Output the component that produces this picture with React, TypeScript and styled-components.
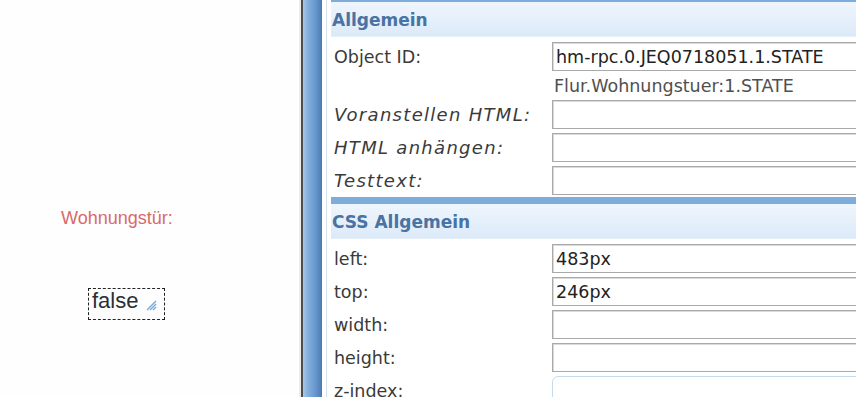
import React from 'react'
import styled, { createGlobalStyle } from 'styled-components'

const GlobalStyle = createGlobalStyle`
  html, body {
    margin: 0;
    padding: 0;
    background: #fff;
    overflow: hidden;
  }
`

const Page = styled.div`
  display: flex;
  width: 856px;
  height: 397px;
  overflow: hidden;
  background: #fff;
`

const Canvas = styled.div`
  position: relative;
  flex: 0 0 299px;
  border-right: 2px solid #ececec;
  background: #fefefe;
`

const Widget = styled.div<{ $x: number; $y: number }>`
  position: absolute;
  left: ${({ $x }) => $x}px;
  top: ${({ $y }) => $y}px;
  font-family: 'Liberation Sans', Arial, sans-serif;
`

const Caption = styled.span`
  font-size: 18px;
  line-height: 21px;
  color: #d86a6a;
  white-space: nowrap;
`

const Selected = styled.div`
  display: flex;
  align-items: flex-end;
  gap: 8px;
  padding: 0 7px 6px 3px;
  border: 1px dashed #222;
  font-size: 22px;
  line-height: 24px;
  color: #2b2f36;
`

const Grip = styled.svg`
  margin-bottom: 2px;
`

const Splitter = styled.div`
  flex: 0 0 19px;
  border-left: 2px solid #4d4d4d;
  background: linear-gradient(
    to right,
    #a7c8e8 0%,
    #86b0dc 25%,
    #6b9bd0 60%,
    #5283ba 90%,
    #4a78ad 100%
  );
`

const Panel = styled.div`
  flex: 1;
  min-width: 0;
  margin-left: 4px;
  border-left: 1px solid #d5e1ec;
  padding-left: 4px;
  overflow: hidden;
  font-family: 'DejaVu Sans', Verdana, sans-serif;
  font-size: 17.5px;
  color: #333;
`

const Header = styled.div<{ $first?: boolean }>`
  height: 35px;
  margin-top: ${({ $first }) => ($first ? '-5px' : '0')};
  border-top: 7px solid #7eaddc;
  box-shadow: inset 0 -1px 0 #e6f0fa;
  background: linear-gradient(to bottom, #eef5fd 0%, #e6f0fb 50%, #dbe9f8 100%);
  display: flex;
  align-items: center;
  padding-left: 1px;
  font-weight: bold;
  font-size: 17px;
  color: #4873a3;
`

const Rows = styled.div`
  padding-top: 3px;
`

const Row = styled.div<{ $h?: number }>`
  display: grid;
  grid-template-columns: 221px 1fr;
  align-items: center;
  height: ${({ $h }) => $h ?? 33}px;
`

const Label = styled.div<{ $italic?: boolean }>`
  padding-left: 3px;
  font-style: ${({ $italic }) => ($italic ? 'italic' : 'normal')};
  font-size: ${({ $italic }) => ($italic ? '18px' : 'inherit')};
  letter-spacing: ${({ $italic }) => ($italic ? '1.3px' : '0')};
  color: #3a3a3a;
  white-space: nowrap;
`

const Input = styled.div<{ $round?: boolean }>`
  box-sizing: border-box;
  height: 29px;
  width: 330px;
  padding-left: 3px;
  display: flex;
  align-items: center;
  background: #fff;
  color: #222;
  white-space: nowrap;
  border: 1px solid ${({ $round }) => ($round ? '#c5dbec' : '#a9a9a9')};
  border-radius: ${({ $round }) => ($round ? '6px' : '0')};
  box-shadow: ${({ $round }) => ($round ? 'none' : 'inset 1px 1px 0 #dadada')};
`

const Note = styled.div`
  grid-column: 2;
  padding-left: 2px;
  color: #505050;
  white-space: nowrap;
`

const general = [
  { label: 'Voranstellen HTML:', italic: true },
  { label: 'HTML anhängen:', italic: true },
  { label: 'Testtext:', italic: true },
]

const css = [
  { label: 'left:', value: '483px' },
  { label: 'top:', value: '246px' },
  { label: 'width:', value: '' },
  { label: 'height:', value: '' },
  { label: 'z-index:', value: '', round: true },
]

const App = () => {
  return (
    <>
      <GlobalStyle />
      <Page>
        <Canvas>
          <Widget $x={61} $y={208}>
            <Caption>Wohnungstür:</Caption>
          </Widget>
          <Widget $x={88} $y={288}>
            <Selected>
              false
              <Grip width="11" height="11" viewBox="0 0 11 11">
                <path
                  d="M10 1 L1 10 M10 4 L4 10 M10 7 L7 10"
                  stroke="#6fa6dc"
                  strokeWidth="1.3"
                />
              </Grip>
            </Selected>
          </Widget>
        </Canvas>
        <Splitter />
        <Panel>
          <Header $first>Allgemein</Header>
          <Rows>
            <Row>
              <Label>Object ID:</Label>
              <Input>hm-rpc.0.JEQ0718051.1.STATE</Input>
            </Row>
            <Row $h={25}>
              <Note>Flur.Wohnungstuer:1.STATE</Note>
            </Row>
            {general.map((item) => (
              <Row key={item.label}>
                <Label $italic={item.italic}>{item.label}</Label>
                <Input />
              </Row>
            ))}
          </Rows>
          <Header>CSS Allgemein</Header>
          <Rows>
            {css.map((item) => (
              <Row key={item.label}>
                <Label>{item.label}</Label>
                <Input $round={item.round}>{item.value}</Input>
              </Row>
            ))}
          </Rows>
        </Panel>
      </Page>
    </>
  )
}

export default App
